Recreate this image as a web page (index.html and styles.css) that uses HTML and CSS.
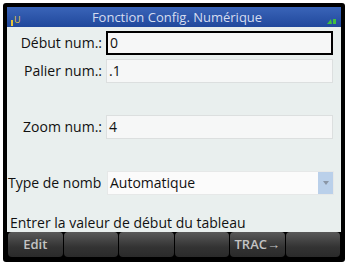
FILE: index.html
```html
<!DOCTYPE html>
<html lang="fr">
<head>
  <meta charset="UTF-8">
  <title>Fonction Config. Numérique</title>
  <link rel="stylesheet" href="styles.css">
</head>
<body>
  <div class="frame">
    <!-- Title bar -->
    <div class="titlebar">
      <span class="ann-left"><span class="bar"></span>U</span>
      <span class="title">Fonction Config. Numérique</span>
      <span class="ann-right">
        <svg width="10" height="6" viewBox="0 0 10 6"><path d="M0 6 L4 1 L5 6 Z" fill="#3fbf3f"/><rect x="6" y="1" width="3" height="5" fill="#3fbf3f"/></svg>
      </span>
    </div>

    <!-- Fields -->
    <div class="content">
      <div class="row">
        <label class="lbl">Début num.:</label>
        <div class="field active">0</div>
      </div>
      <div class="row">
        <label class="lbl">Palier num.:</label>
        <div class="field">.1</div>
      </div>
      <div class="row"></div>
      <div class="row">
        <label class="lbl">Zoom num.:</label>
        <div class="field">4</div>
      </div>
      <div class="row"></div>
      <div class="row">
        <label class="lbl lbl-clip">Type de nomb</label>
        <div class="field select">
          <span>Automatique</span>
          <span class="drop"><svg width="6" height="4" viewBox="0 0 6 4"><path d="M0 0 L6 0 L3 4 Z" fill="#8a96a6"/></svg></span>
        </div>
      </div>
      <div class="message">Entrer la valeur de début du tableau</div>
    </div>

    <!-- Soft keys -->
    <div class="softkeys">
      <div class="key">Edit</div>
      <div class="key"></div>
      <div class="key"></div>
      <div class="key"></div>
      <div class="key">TRAC&rarr;</div>
      <div class="key"></div>
    </div>
  </div>
</body>
</html>
```

FILE: styles.css
```css
body {
  margin: 0;
  background: #ffffff;
  font-family: "Open Sans", "Noto Sans", sans-serif;
}
.frame {
  margin: 3px;
  width: 334px;
  height: 251px;
  border: 4px solid #000;
  border-radius: 3px;
  display: flex;
  flex-direction: column;
  background: #e9efee;
}
.titlebar {
  height: 20px;
  background: linear-gradient(#3a64b8, #20489c);
  display: flex;
  align-items: center;
  color: #d5ddf0;
  font-size: 13px;
  padding: 0 4px;
}
.title {
  flex: 1;
  text-align: center;
  padding-left: 6px;
}
.ann-left {
  width: 24px;
  font-size: 9px;
  color: #e8c53a;
  display: flex;
  align-items: flex-end;
  padding-top: 6px;
}
.ann-left .bar {
  width: 2px;
  height: 6px;
  background: #e8c53a;
  margin-right: 1px;
}
.ann-right {
  width: 24px;
  display: flex;
  justify-content: flex-end;
  padding-top: 8px;
}
.content {
  flex: 1;
  padding-top: 2px;
  display: flex;
  flex-direction: column;
}
.row {
  height: 28px;
  display: flex;
  align-items: center;
}
.lbl {
  width: 95px;
  padding-right: 4px;
  text-align: right;
  font-size: 14px;
  color: #111;
  white-space: nowrap;
  overflow: hidden;
}
.lbl-clip {
  text-align: left;
  padding-left: 1px;
}
.field {
  width: 223px;
  height: 22px;
  border: 1px solid #dcdfdf;
  background: #f6f7f7;
  font-size: 14px;
  color: #111;
  line-height: 22px;
  padding-left: 2px;
  box-sizing: content-box;
}
.field.active {
  width: 221px;
  height: 20px;
  line-height: 20px;
  border: 2px solid #000;
}
.select {
  display: flex;
  justify-content: space-between;
  background: #fbfbfb;
  border-color: #e6e8e8;
}
.drop {
  width: 15px;
  background: #bad0ea;
  display: flex;
  align-items: center;
  justify-content: center;
}
.message {
  margin-top: 16px;
  font-size: 14px;
  color: #111;
  padding-left: 3px;
}
.softkeys {
  height: 26px;
  background: #000;
  display: flex;
  gap: 1px;
  padding: 0 1px 1px 1px;
}
.key {
  flex: 1;
  border-radius: 4px;
  background: linear-gradient(#5a5a5a, #333 60%, #2a2a2a);
  color: #c4c4c4;
  font-size: 13px;
  font-weight: 600;
  text-align: center;
  line-height: 25px;
}
```
